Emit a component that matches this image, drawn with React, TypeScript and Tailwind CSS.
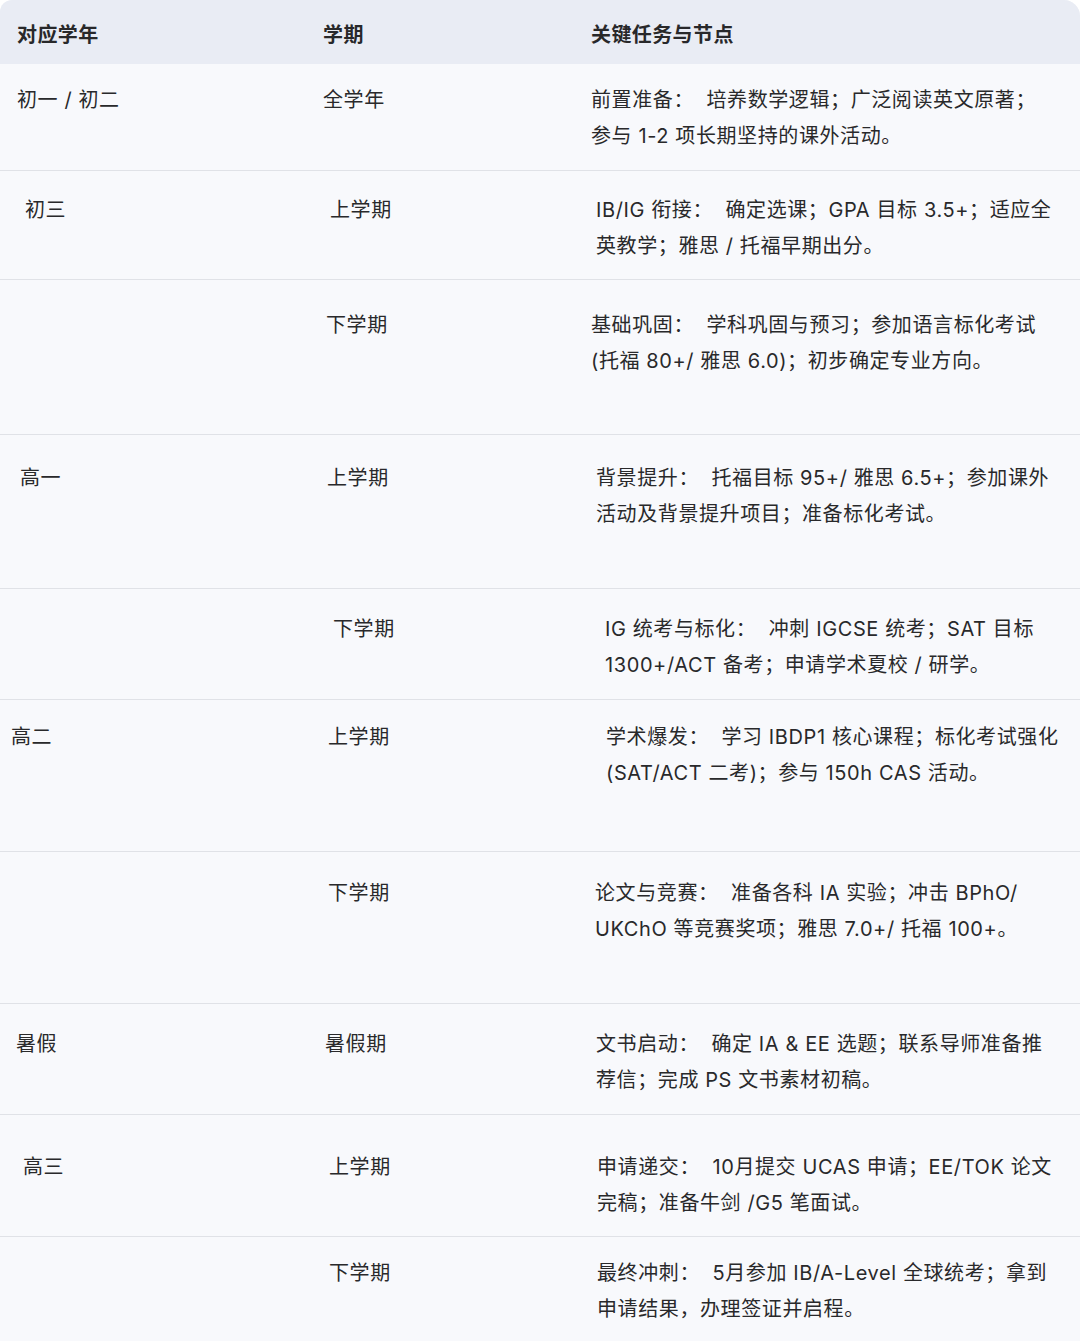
const rows = [
  {
    year: '初一 / 初二',
    term: '全学年',
    lines: ['前置准备：  培养数学逻辑；广泛阅读英文原著；', '参与 1-2 项长期坚持的课外活动。'],
    row: 'h-[107px] pt-[18px] border-b',
    c1: 'w-[323px] pl-[17px]',
    c2: 'w-[268px]',
  },
  {
    year: '初三',
    term: '上学期',
    lines: ['IB/IG 衔接：  确定选课；GPA 目标 3.5+；适应全', '英教学；雅思 / 托福早期出分。'],
    row: 'h-[109px] pt-[21px] border-b',
    c1: 'w-[330px] pl-[25px]',
    c2: 'w-[266px]',
  },
  {
    year: '',
    term: '下学期',
    lines: ['基础巩固：  学科巩固与预习；参加语言标化考试', '(托福 80+/ 雅思 6.0)；初步确定专业方向。'],
    row: 'h-[155px] pt-[27px] border-b',
    c1: 'w-[326px]',
    c2: 'w-[265px]',
  },
  {
    year: '高一',
    term: '上学期',
    lines: ['背景提升：  托福目标 95+/ 雅思 6.5+；参加课外', '活动及背景提升项目；准备标化考试。'],
    row: 'h-[154px] pt-[25px] border-b',
    c1: 'w-[327px] pl-[20px]',
    c2: 'w-[269px]',
  },
  {
    year: '',
    term: '下学期',
    lines: ['IG 统考与标化：  冲刺 IGCSE 统考；SAT 目标', '1300+/ACT 备考；申请学术夏校 / 研学。'],
    row: 'h-[111px] pt-[22px] border-b',
    c1: 'w-[333px]',
    c2: 'w-[272px]',
  },
  {
    year: '高二',
    term: '上学期',
    lines: ['学术爆发：  学习 IBDP1 核心课程；标化考试强化', '(SAT/ACT 二考)；参与 150h CAS 活动。'],
    row: 'h-[152px] pt-[19px] border-b',
    c1: 'w-[328px] pl-[11px]',
    c2: 'w-[278px]',
  },
  {
    year: '',
    term: '下学期',
    lines: ['论文与竞赛：  准备各科 IA 实验；冲击 BPhO/', 'UKChO 等竞赛奖项；雅思 7.0+/ 托福 100+。'],
    row: 'h-[152px] pt-[23px] border-b',
    c1: 'w-[328px]',
    c2: 'w-[267px]',
  },
  {
    year: '暑假',
    term: '暑假期',
    lines: ['文书启动：  确定 IA & EE 选题；联系导师准备推', '荐信；完成 PS 文书素材初稿。'],
    row: 'h-[111px] pt-[22px] border-b',
    c1: 'w-[325px] pl-[16px]',
    c2: 'w-[271px]',
  },
  {
    year: '高三',
    term: '上学期',
    lines: ['申请递交：  10月提交 UCAS 申请；EE/TOK 论文', '完稿；准备牛剑 /G5 笔面试。'],
    row: 'h-[122px] pt-[34px] border-b',
    c1: 'w-[329px] pl-[23px]',
    c2: 'w-[268px]',
  },
  {
    year: '',
    term: '下学期',
    lines: ['最终冲刺：  5月参加 IB/A-Level 全球统考；拿到', '申请结果，办理签证并启程。'],
    row: 'h-[104px] pt-[18px]',
    c1: 'w-[329px]',
    c2: 'w-[268px]',
  },
]

export default function App() {
  return (
    <div
      className="w-[1080px] h-[1341px] overflow-hidden bg-white text-[20px] leading-[36px] tracking-[0.6px] text-[#29292b]"
      style={{ fontFamily: 'Inter, "Noto Sans CJK SC", sans-serif' }}
    >
      <div className="rounded-tl-[12px] rounded-tr-[16px] overflow-hidden bg-[#f8f9fc]">
        {/* Header */}
        <div className="flex h-[64px] pt-[17px] bg-[#e9ecf4] font-semibold text-[20px] tracking-[0.4px] text-[#28282a]">
          <div className="w-[323px] pl-[17px]">对应学年</div>
          <div className="w-[268px]">学期</div>
          <div className="flex-1">关键任务与节点</div>
        </div>

        {/* Rows */}
        {rows.map((r, i) => (
          <div key={i} className={`flex border-[#e0e2e7] ${r.row}`}>
            <div className={`shrink-0 whitespace-nowrap ${r.c1}`}>{r.year}</div>
            <div className={`shrink-0 whitespace-nowrap ${r.c2}`}>{r.term}</div>
            <div className="flex-1 min-w-0 overflow-hidden whitespace-pre">
              {r.lines.map((l, j) => (
                <div key={j}>{l}</div>
              ))}
            </div>
          </div>
        ))}
      </div>
    </div>
  )
}
